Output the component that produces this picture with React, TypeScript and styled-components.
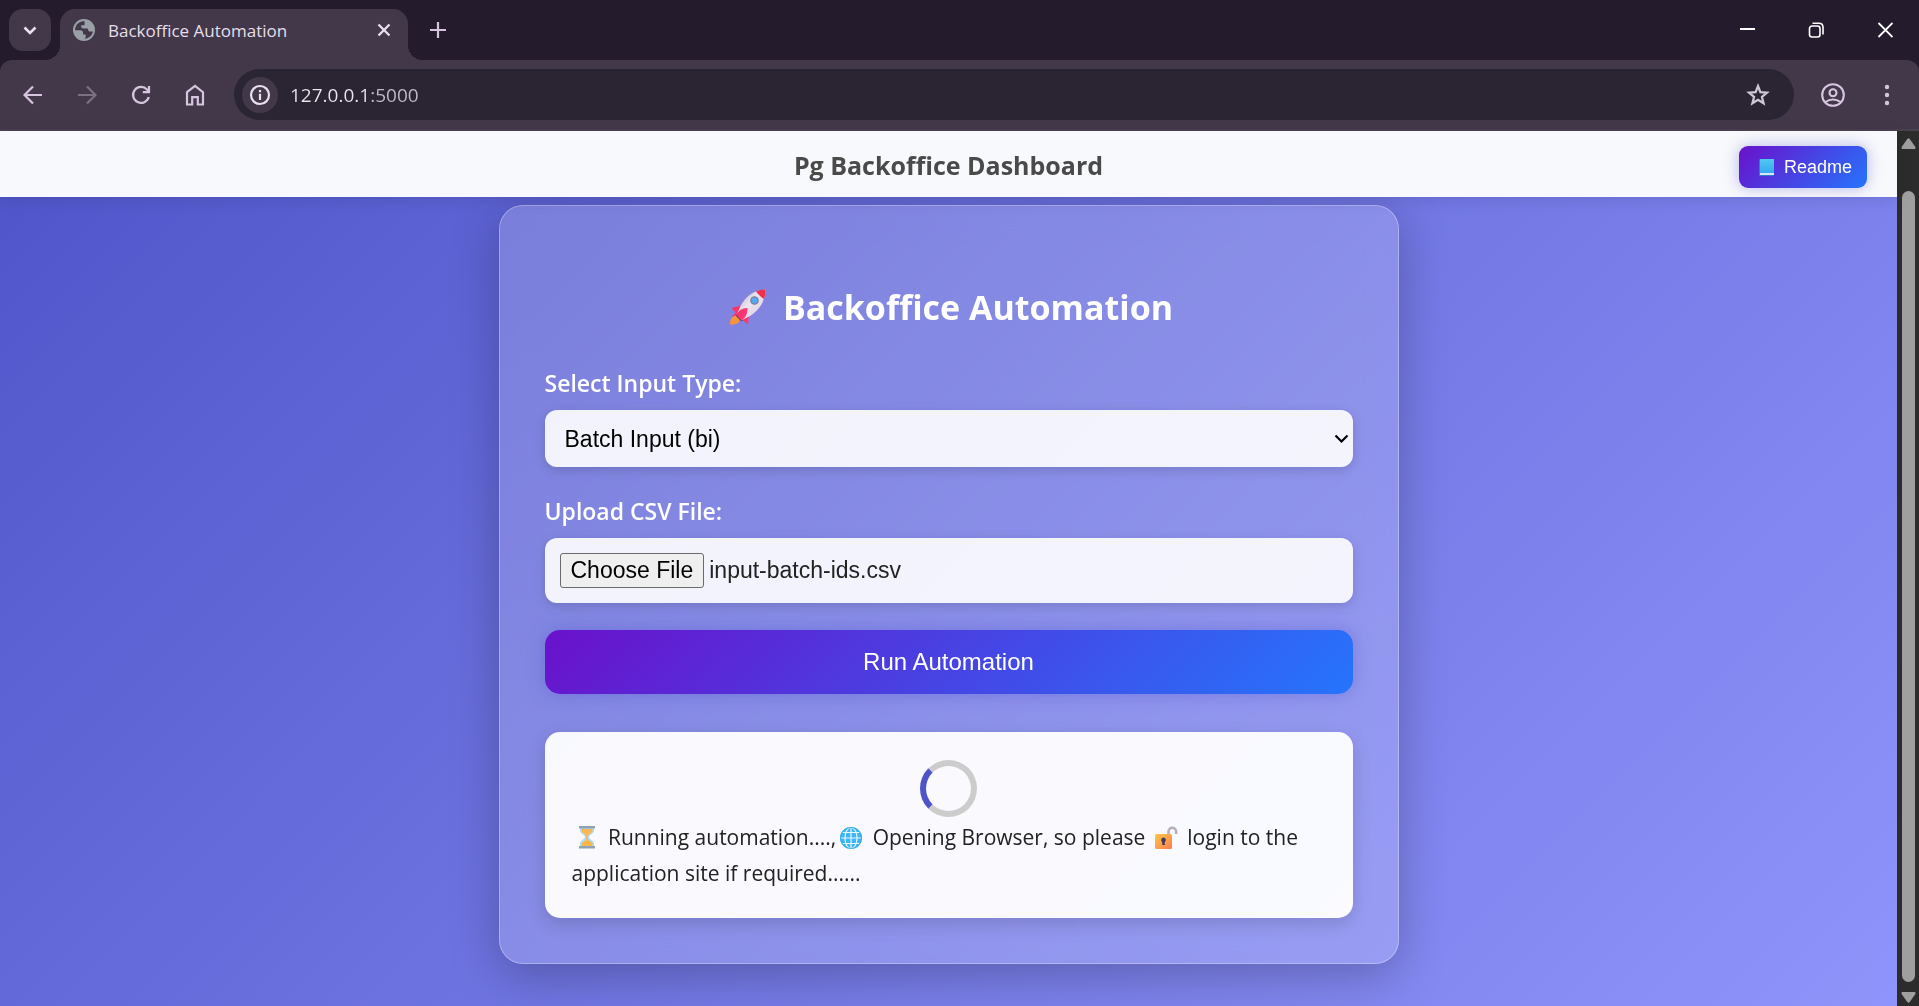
import React, { useEffect, useRef } from "react";
import styled, { createGlobalStyle, css, keyframes } from "styled-components";

const UI_FONT = `"Segoe UI", "Open Sans", "Noto Sans", sans-serif`;
const FORM_FONT = `"Liberation Sans", Arial, sans-serif`;

const GlobalStyle = createGlobalStyle`
  *, *::before, *::after { box-sizing: border-box; }
  body { margin: 0; font-family: ${UI_FONT}; background: #241b2d; }
  button, input, select { margin: 0; }
`;

/* ---------- browser frame ---------- */

const Browser = styled.div`
  min-height: 100vh;
  display: flex;
  flex-direction: column;
`;

const TabStrip = styled.div`
  display: flex;
  height: 60px;
  padding: 9px 0 0 9px;
  background: #241b2d;
`;

const IconButton = styled.button<{ $width?: number; $color?: string }>`
  display: grid;
  place-items: center;
  flex: none;
  width: ${(p) => p.$width ?? 54}px;
  height: 42px;
  padding: 0;
  border: 0;
  background: transparent;
  color: ${(p) => p.$color ?? "#d7c5e0"};
`;

const TabSearch = styled(IconButton)`
  border-radius: 14px;
  background: #42384a;
`;

const Tab = styled.div`
  position: relative;
  display: flex;
  align-items: center;
  width: 348px;
  margin-left: 9px;
  padding: 0 6px 9px 13px;
  border-radius: 15px 15px 0 0;
  background: #42384a;

  &::before,
  &::after {
    content: "";
    position: absolute;
    bottom: 0;
    width: 15px;
    height: 15px;
  }
  &::before {
    right: 100%;
    background: radial-gradient(circle at 0 0, transparent 15px, #42384a 15px);
  }
  &::after {
    left: 100%;
    background: radial-gradient(circle at 100% 0, transparent 15px, #42384a 15px);
  }
`;

const TabTitle = styled.span`
  flex: 1;
  margin-left: 13px;
  padding-top: 2px;
  font-size: 17px;
  line-height: 24px;
  color: #e6dfe9;
  white-space: nowrap;
`;

const WindowControls = styled.div`
  display: flex;
  margin-left: auto;
`;

const ToolbarBack = styled.div`
  background: #241b2d;
`;

const Toolbar = styled.div`
  display: flex;
  align-items: center;
  height: 71px;
  padding: 0 5px 0 6px;
  border-bottom: 2px solid #4a4150;
  border-radius: 12px 12px 0 0;
  background: #42384a;
`;

const AddressBar = styled.div`
  display: flex;
  align-items: center;
  flex: 1;
  height: 51px;
  margin: 0 12px;
  padding: 0 9px 0 8px;
  border-radius: 26px;
  background: #2b2433;
`;

const SiteInfo = styled.button`
  display: grid;
  place-items: center;
  width: 36px;
  height: 36px;
  padding: 0;
  border: 0;
  border-radius: 50%;
  background: #42384a;
  color: #e8e0ec;
`;

const AddressInput = styled.input`
  flex: 1;
  min-width: 0;
  padding: 0;
  margin-left: 12px;
  border: 0;
  outline: 0;
  font-family: ${UI_FONT};
  font-size: 19px;
  line-height: 28px;
  color: transparent;
  background: linear-gradient(90deg, #ece6ef 80px, #c3bcc8 80px);
  background-clip: text;
  -webkit-background-clip: text;
`;

/* ---------- page ---------- */

const Viewport = styled.div`
  flex: 1;
  display: grid;
  grid-template-columns: minmax(0, 1fr) 22px;
`;

const Page = styled.div`
  display: flex;
  flex-direction: column;
  background: linear-gradient(135deg, #4e54c8, #8f94fb) bottom / 100% calc(100% + 49px);
`;

const Header = styled.header`
  position: relative;
  z-index: 1;
  display: grid;
  grid-template-columns: 1fr auto 1fr;
  align-items: start;
  padding: 15px 30px 9px;
  background: #f8f9fc;
  box-shadow: 0 3px 15px rgba(0, 0, 0, 0.1);
`;

const HeaderTitle = styled.h2`
  grid-column: 2;
  margin: 0;
  font-size: 25px;
  font-weight: 700;
  line-height: 38px;
  color: #4a4a4a;
`;

const gradientButton = css`
  border: 0;
  font-family: ${FORM_FONT};
  color: #fff;
  background: linear-gradient(135deg, #6a11cb, #2575fc);
`;

const ReadmeButton = styled.button`
  ${gradientButton}
  justify-self: end;
  display: flex;
  align-items: center;
  gap: 5px;
  height: 42px;
  padding: 0 15px;
  border-radius: 9px;
  font-size: 18px;
  box-shadow: 0 0 15px rgba(78, 84, 200, 0.4);
`;

const Main = styled.main`
  flex: 1;
  padding: 8px 24px 42px;
`;

const Card = styled.section`
  max-width: 900px;
  margin: 0 auto;
  padding: 45px;
  border: 1px solid rgba(255, 255, 255, 0.3);
  border-radius: 24px;
  background: rgba(255, 255, 255, 0.18);
  backdrop-filter: blur(15px);
  box-shadow: 0 12px 48px rgba(0, 0, 0, 0.25);
`;

const CardTitle = styled.h1`
  display: flex;
  align-items: center;
  justify-content: center;
  gap: 10px;
  margin: 32px 0 35px;
  font-size: 34px;
  font-weight: 700;
  line-height: 48px;
  color: #fff;
`;

const Field = styled.div`
  display: grid;
  margin-bottom: 27px;
`;

const Label = styled.label`
  margin-bottom: 10px;
  font-size: 23px;
  font-weight: 600;
  line-height: 34px;
  color: #fff;
`;

const control = css`
  width: 100%;
  padding: 15px;
  border: 0;
  border-radius: 12px;
  font-family: ${FORM_FONT};
  font-size: 23px;
  background: rgba(255, 255, 255, 0.9);
  box-shadow: 0 3px 12px rgba(0, 0, 0, 0.15);
`;

const SelectBox = styled.div`
  display: grid;
  align-items: center;
  > * {
    grid-area: 1 / 1;
  }
  > svg {
    justify-self: end;
    margin-right: 4px;
    pointer-events: none;
  }
`;

const Select = styled.select`
  ${control}
  appearance: none;
  height: 57px;
  padding: 0 20px;
  color: #000;
`;

const FileInput = styled.input`
  ${control}
  height: 65px;
  color: #222;

  &::file-selector-button {
    height: 35px;
    margin: 0 5px 0 0;
    padding: 0 10px;
    border: 1px solid #6b6b6b;
    border-radius: 3px;
    font: inherit;
    color: #000;
    background: #efefef;
  }
`;

const RunButton = styled.button`
  ${gradientButton}
  display: block;
  width: 100%;
  height: 64px;
  padding: 0;
  border-radius: 15px;
  font-size: 24px;
  box-shadow: 0 0 18px rgba(78, 84, 200, 0.4);
`;

const Status = styled.div`
  margin-top: 38px;
  padding: 27px;
  border-radius: 15px;
  background: rgba(255, 255, 255, 0.95);
  box-shadow: 0 6px 18px rgba(0, 0, 0, 0.15);
`;

const spin = keyframes`
  to { transform: rotate(360deg); }
`;

const Spinner = styled.div`
  width: 57px;
  height: 57px;
  margin: 1px auto 2px;
  border: 6px solid #ccc;
  border-left-color: #4e54c8;
  border-radius: 50%;
  animation: ${spin} 1s linear infinite paused;
`;

const StatusText = styled.p`
  margin: 0;
  font-size: 21px;
  line-height: 36px;
  color: #222;
`;

const Emoji = styled.svg`
  flex: none;
  vertical-align: -7px;
`;

/* ---------- scrollbar ---------- */

const Scrollbar = styled.div`
  display: flex;
  flex-direction: column;
  align-items: center;
  padding: 7px 0 3px;
  background: #2c2c2c;
  color: #9f9f9f;
`;

const Thumb = styled.div`
  flex: 1;
  width: 13px;
  margin: 42px 0 10px;
  border-radius: 7px;
  background: #9f9f9f;
`;

/* ---------- icons ---------- */

const Line = ({ size, d, w = 2 }: { size: number; d: string; w?: number }) => (
  <svg width={size} height={size} viewBox={`0 0 ${size} ${size}`} fill="none" stroke="currentColor" strokeWidth={w} aria-hidden>
    <path d={d} />
  </svg>
);

const Favicon = () => (
  <svg width="22" height="22" viewBox="0 0 22 22" aria-hidden>
    <circle cx="11" cy="11" r="11" fill="#9aa0a6" />
    <path
      d="M11.6 2.2C8 1.8 4.3 4 2.8 7.4c-.6 1.3-.8 2.5-.8 3.8l5.4.1c1.600 0 2.700 1.100 2.700 2.600v1.500h2.600v2.200c0 .8-.4 1.500-.9 2.200 4.100-.3 7.400-3.200 8.100-7.200h-3c-1.200 0-1.700-.9-1.700-1.900 0-.8-.5-1.200-1.300-1.200h-3.700c-1.300 0-2-.8-2-2V6.300h2c1 0 1.400-.6 1.400-1.400V3.800Z"
      fill="#42384a"
    />
    <path d="M2 12.200c.5 3.600 3.300 6.700 7.200 7.500v-2.500c-1.400 0-2.300-.9-2.300-2.200v-.9L4 12.400Z" fill="#9aa0a6" />
  </svg>
);

const Rocket = () => (
  <Emoji width="49" height="48" viewBox="0 0 49 48" role="img" aria-label="rocket">
    <defs>
      <linearGradient id="rocketBody" x1="0" y1="0" x2="1" y2="1">
        <stop offset="0" stopColor="#b9adb9" />
        <stop offset=".45" stopColor="#ece4ee" />
        <stop offset="1" stopColor="#dccbe0" />
      </linearGradient>
      <linearGradient id="rocketFin" x1="0" y1="0" x2="1" y2="1">
        <stop offset="0" stopColor="#f0315c" />
        <stop offset="1" stopColor="#ff3d86" />
      </linearGradient>
    </defs>
    <path d="M10 33c3-2 7 1 5.500 5-1.200 3-5.500 3.500-9.500 3.500 0-4 .8-7 4-8.500Z" fill="#f9943b" />
    <path d="m12 33 5 5 3-1-7-7Z" fill="#4b3f63" />
    <path d="M17 22.500 7.500 25l4 4.500-4 4.500 6-2 8-5Z" fill="url(#rocketFin)" />
    <path d="M25 33 24 41.500l-5-4-1-5 5-4Z" fill="url(#rocketFin)" />
    <path d="M41.500 6.500C31 7 22.500 12 16.500 23L13 31l5 6 8-4C36 26.500 41 18 41.500 6.500Z" fill="url(#rocketBody)" />
    <path d="M41.500 6.500c-3.500 0-6.500.5-9.500 2 2.500 3.500 5 5.500 8 7.500 1-3 1.500-6 1.500-9.500Z" fill="#ef2f4b" />
    <path d="M23.500 25c-5.500 0-9.500 3-11 7l5 5.500c4-2.500 6-6.500 6-12.500Z" fill="url(#rocketFin)" />
    <circle cx="30.500" cy="17.500" r="4.300" fill="#77809a" />
    <circle cx="30.500" cy="17.500" r="3" fill="#55a8f5" />
  </Emoji>
);

const Hourglass = () => (
  <Emoji width="31" height="30" viewBox="0 0 31 30" role="img" aria-label="hourglass">
    <path d="M8 5h14v3.500c0 3-5 4.500-5 6.500s5 3.500 5 6.500V25H8v-3.500c0-3 5-4.500 5-6.500s-5-3.500-5-6.500Z" fill="#b5dbf4" />
    <path d="M9.500 7h11v1.500c0 2.500-4.700 4-5 6.500h-1c-.3-2.500-5-4-5-6.500Z" fill="#f7b955" />
    <path d="M14.500 14h1l.5 4 4.500 3v4h-11v-4l4.500-3Z" fill="#fbb64b" />
    <path d="M7 4h16v2.500H7ZM7 24h16v2.500H7Z" fill="#90a3b2" />
  </Emoji>
);

const Globe = () => (
  <Emoji width="31" height="30" viewBox="0 0 31 30" role="img" aria-label="globe">
    <circle cx="15" cy="16" r="11" fill="#3cb7f5" />
    <g fill="none" stroke="#e6f6ff" strokeWidth="1.200">
      <path d="M15 5v22M4 16h22M6 10.500h18M6 21.500h18" />
      <ellipse cx="15" cy="16" rx="6" ry="10.500" />
    </g>
    <circle cx="15" cy="16" r="10.500" fill="none" stroke="#37a9ee" />
  </Emoji>
);

const OpenLock = () => (
  <Emoji width="31" height="30" viewBox="0 0 31 30" role="img" aria-label="unlocked">
    <defs>
      <linearGradient id="lockBody" x1="0" y1="0" x2="1" y2="1">
        <stop offset="0" stopColor="#fcc845" />
        <stop offset="1" stopColor="#f97d50" />
      </linearGradient>
    </defs>
    <path d="M17.500 12V9.500a3.800 3.800 0 0 1 7.600 0V12" fill="none" stroke="#b9aebd" strokeWidth="2.600" />
    <rect x="4" y="12" width="17" height="15" rx="1.500" fill="url(#lockBody)" />
    <path d="M12.500 15.500a2.400 2.400 0 0 1 1.300 4.400V23h-2.600v-3.100a2.400 2.400 0 0 1 1.300-4.400Z" fill="#4c3a55" />
  </Emoji>
);

const Book = () => (
  <svg width="25" height="24" viewBox="0 0 25 24" aria-hidden>
    <defs>
      <linearGradient id="bookCover" x1="0" y1="0" x2="0" y2="1">
        <stop offset="0" stopColor="#4fc9ef" />
        <stop offset="1" stopColor="#36a9f0" />
      </linearGradient>
    </defs>
    <rect x="5" y="4" width="15" height="17" rx="1" fill="#2b7fc4" />
    <rect x="6" y="18" width="14" height="2" fill="#dfe3f7" />
    <rect x="6" y="4" width="14" height="14" fill="url(#bookCover)" />
  </svg>
);

export default function App() {
  const fileRef = useRef<HTMLInputElement>(null);

  useEffect(() => {
    const transfer = new DataTransfer();
    transfer.items.add(new File(["id\n"], "input-batch-ids.csv", { type: "text/csv" }));
    if (fileRef.current) fileRef.current.files = transfer.files;
  }, []);

  return (
    <Browser>
      <GlobalStyle />
      <TabStrip>
        <TabSearch $width={42} $color="#e8e0ec" aria-label="Search tabs">
          <Line size={18} w={2.600} d="m3.500 6.500 5.500 5.500 5.500-5.500" />
        </TabSearch>
        <Tab>
          <Favicon />
          <TabTitle>Backoffice Automation</TabTitle>
          <IconButton $width={36} $color="#e8e0ec" aria-label="Close tab">
            <Line size={14} w={2.3} d="m1.500 1.500 11 11M12.500 1.500l-11 11" />
          </IconButton>
        </Tab>
        <IconButton $width={60} aria-label="New tab">
          <Line size={16} w={2.2} d="M8 0v16M0 8h16" />
        </IconButton>
        <WindowControls>
          <IconButton $width={69} $color="#fff" aria-label="Minimize">
            <Line size={16} w={2} d="M1 7h15" />
          </IconButton>
          <IconButton $width={69} $color="#fff" aria-label="Restore">
            <Line
              size={16}
              w={1.6}
              d="M4 4h5.500a2.500 2.500 0 0 1 2.500 2.500v6A2.500 2.500 0 0 1 9.500 15H4a2.500 2.500 0 0 1-2.500-2.500v-6A2.500 2.500 0 0 1 4 4ZM4.500 1.300h6.500A4 4 0 0 1 15 5v7.500"
            />
          </IconButton>
          <IconButton $width={69} $color="#fff" aria-label="Close window">
            <Line size={16} w={1.8} d="m1.500 1 14 14M15.500 1l-14 14" />
          </IconButton>
        </WindowControls>
      </TabStrip>

      <ToolbarBack>
        <Toolbar>
          <IconButton aria-label="Back">
            <Line size={20} w={2.2} d="M19 10H2.500M10 1.500 1.500 10l8.500 8.500" />
          </IconButton>
          <IconButton $color="#7b7083" aria-label="Forward">
            <Line size={20} w={2.2} d="M1 10h16.500M10 1.500l8.500 8.500-8.500 8.500" />
          </IconButton>
          <IconButton aria-label="Reload">
            <Line size={20} w={2.2} d="M17.800 12A8 8 0 1 1 16 4.500l2 2M18 1v6.200h-6.200" />
          </IconButton>
          <IconButton aria-label="Home">
            <Line size={22} w={2.200} d="M3 8.200 11 2l8 6.200V20.500h-5.200v-7.300H8.200v7.300H3Z" />
          </IconButton>
          <AddressBar>
            <SiteInfo aria-label="Site information">
              <Line size={22} w={2.2} d="M11 2a9 9 0 1 0 0 18 9 9 0 0 0 0-18ZM11 9.800V16M11 6v2.300" />
            </SiteInfo>
            <AddressInput aria-label="Address" defaultValue="127.0.0.1:5000" spellCheck={false} />
            <IconButton $color="#cfc7d3" aria-label="Bookmark this page">
              <Line size={24} w={2.200} d="m12 3 2.400 6.100 6.600.5-5.100 4.200 1.700 6.500L12 16.700l-5.600 3.600 1.700-6.500L3 9.600l6.600-.5Z" />
            </IconButton>
          </AddressBar>
          <IconButton aria-label="Profile">
            <Line
              size={24}
              w={2.100}
              d="M12 1.200a10.800 10.800 0 1 0 0 21.600 10.800 10.800 0 0 0 0-21.600ZM12 6.200a3.500 3.500 0 1 0 0 7 3.500 3.500 0 0 0 0-7ZM4.500 19c4.500-3.200 10.500-3.200 15 0"
            />
          </IconButton>
          <IconButton aria-label="Menu">
            <svg width="24" height="24" viewBox="0 0 24 24" fill="currentColor" aria-hidden>
              <circle cx="12" cy="4" r="2.200" />
              <circle cx="12" cy="12" r="2.200" />
              <circle cx="12" cy="20" r="2.200" />
            </svg>
          </IconButton>
        </Toolbar>
      </ToolbarBack>

      <Viewport>
        <Page>
          <Header>
            <HeaderTitle>Pg Backoffice Dashboard</HeaderTitle>
            <ReadmeButton>
              <Book />
              Readme
            </ReadmeButton>
          </Header>
          <Main>
            <Card>
              <CardTitle>
                <Rocket />
                Backoffice Automation
              </CardTitle>
              <Field>
                <Label htmlFor="inputType">Select Input Type:</Label>
                <SelectBox>
                  <Select id="inputType" defaultValue="bi">
                    <option value="bi">Batch Input (bi)</option>
                  </Select>
                  <Line size={15} w={2.200} d="m1.500 4.500 6 6 6-6" />
                </SelectBox>
              </Field>
              <Field>
                <Label htmlFor="csvFile">Upload CSV File:</Label>
                <FileInput ref={fileRef} id="csvFile" type="file" accept=".csv" />
              </Field>
              <RunButton type="button">Run Automation</RunButton>
              <Status role="status">
                <Spinner />
                <StatusText>
                  <Hourglass /> Running automation....,
                  <Globe /> Opening Browser, so please <OpenLock /> login to the application site if required......
                </StatusText>
              </Status>
            </Card>
          </Main>
        </Page>
        <Scrollbar aria-hidden>
          <svg width="15" height="11" viewBox="0 0 15 11" fill="currentColor">
            <path d="M6.300 1a1.500 1.500 0 0 1 2.400 0l5.500 7.800c.7 1 .2 2.200-1 2.200H1.800C.6 11 .1 9.800.8 8.800Z" />
          </svg>
          <Thumb />
          <svg width="15" height="11" viewBox="0 0 15 11" fill="currentColor">
            <path d="M6.300 10a1.500 1.500 0 0 0 2.400 0l5.500-7.800c.7-1 .2-2.200-1-2.200H1.800C.6 0 .1 1.200.8 2.200Z" />
          </svg>
        </Scrollbar>
      </Viewport>
    </Browser>
  );
}
